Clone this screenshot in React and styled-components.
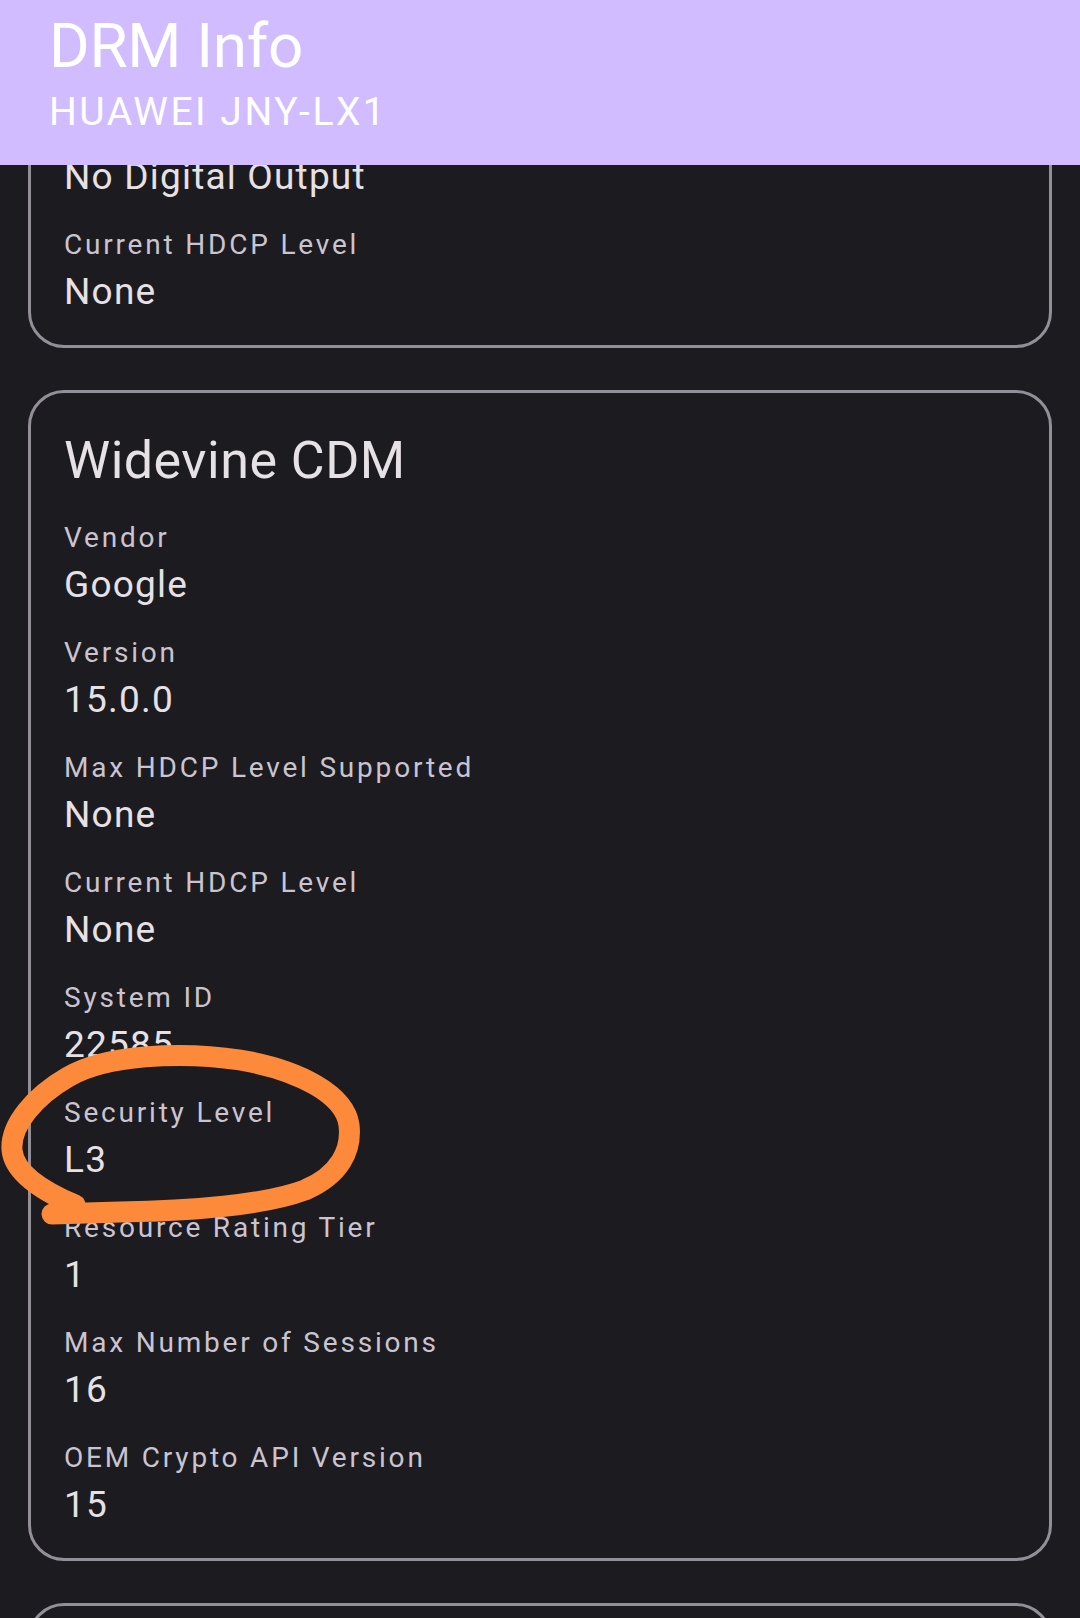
import React, { useLayoutEffect, useRef } from 'react'
import styled, { createGlobalStyle } from 'styled-components'

const cards = [
    {
        title: 'ClearKey CDM',
        rows: [
            ['Vendor', 'Google'],
            ['Version', '1.2'],
            ['Max HDCP Level Supported', 'No Digital Output', true],
            ['Current HDCP Level', 'None'],
        ],
    },
    {
        title: 'Widevine CDM',
        rows: [
            ['Vendor', 'Google'],
            ['Version', '15.0.0'],
            ['Max HDCP Level Supported', 'None'],
            ['Current HDCP Level', 'None'],
            ['System ID', '22585'],
            ['Security Level', 'L3'],
            ['Resource Rating Tier', '1'],
            ['Max Number of Sessions', '16'],
            ['OEM Crypto API Version', '15'],
        ],
    },
    {
        title: 'Device',
        rows: [
            ['Manufacturer', 'HUAWEI'],
            ['Model', 'JNY-LX1'],
        ],
    },
]

function App() {
    const scroller = useRef(null)
    const anchor = useRef(null)

    // the list is scrolled so the first card is mostly under the app bar
    useLayoutEffect(() => {
        const s = scroller.current
        const a = anchor.current
        if (!s || !a) return
        const top = a.getBoundingClientRect().top - s.getBoundingClientRect().top + s.scrollTop
        s.scrollTop = top + 15
    }, [])

    return (
        <Screen>
            <GlobalStyle />
            <AppBar>
                <Title>DRM Info</Title>
                <Subtitle>HUAWEI JNY-LX1</Subtitle>
            </AppBar>
            <Scroller ref={scroller}>
                <List>
                    {cards.map((card) => (
                        <Card key={card.title}>
                            <CardTitle>{card.title}</CardTitle>
                            {card.rows.map(([label, value, mark]) => (
                                <Item key={label}>
                                    <Label>{label}</Label>
                                    <Value ref={mark ? anchor : null}>{value}</Value>
                                </Item>
                            ))}
                        </Card>
                    ))}
                </List>
            </Scroller>
            <Scribble viewBox="0 0 1080 1618" width="1080" height="1618">
                <path
                    d="M 52 1214 L 120 1212 C 190 1211 265 1205 305 1190 C 340 1175 352 1150 349 1125 C 345 1095 300 1070 240 1060 C 180 1051 105 1055 68 1077 C 35 1096 10 1125 12 1150 C 14 1172 40 1190 75 1205"
                    fill="none"
                    stroke="#fd8a3a"
                    strokeWidth="21"
                    strokeLinecap="round"
                    strokeLinejoin="round"
                />
            </Scribble>
        </Screen>
    )
}

export default App

const GlobalStyle = createGlobalStyle`
    html, body {
        margin: 0;
        padding: 0;
        background: #1c1b1f;
    }
    * {
        box-sizing: border-box;
    }
`
const Screen = styled.div`
    position: relative;
    width: 1080px;
    height: 1618px;
    display: flex;
    flex-direction: column;
    background: #1c1b1f;
    font-family: Roboto, 'Noto Sans', sans-serif;
    overflow: hidden;
`
const AppBar = styled.header`
    height: 165px;
    flex: none;
    background: #d0bcff;
    padding: 11px 49px 0;
    display: flex;
    flex-direction: column;
    gap: 6px;
    z-index: 1;
`
const Title = styled.h1`
    margin: 0;
    font-size: 62px;
    line-height: 70px;
    font-weight: 400;
    letter-spacing: -0.3px;
    color: #ffffff;
`
const Subtitle = styled.div`
    font-size: 39px;
    line-height: 50px;
    letter-spacing: 2.5px;
    color: #ffffff;
`
const Scroller = styled.main`
    flex: 1;
    overflow: hidden;
`
const List = styled.div`
    padding: 0 28px 40px;
    display: flex;
    flex-direction: column;
    gap: 42px;
`
const Card = styled.section`
    border: 3px solid #938f99;
    border-radius: 36px;
    padding: 36px 33px 28px;
    display: flex;
    flex-direction: column;
    gap: 23px;
`
const CardTitle = styled.h2`
    margin: 0 0 2px;
    font-size: 52px;
    line-height: 64px;
    font-weight: 400;
    letter-spacing: 0.5px;
    color: #e6e1e5;
`
const Item = styled.div`
    display: flex;
    flex-direction: column;
`
const Label = styled.div`
    font-size: 28px;
    line-height: 40px;
    letter-spacing: 2.8px;
    color: #cac4d0;
`
const Value = styled.div`
    padding-top: 2px;
    font-size: 37px;
    line-height: 50px;
    letter-spacing: 1.2px;
    color: #e6e1e5;
`
const Scribble = styled.svg`
    position: absolute;
    left: 0;
    top: 0;
    pointer-events: none;
`
